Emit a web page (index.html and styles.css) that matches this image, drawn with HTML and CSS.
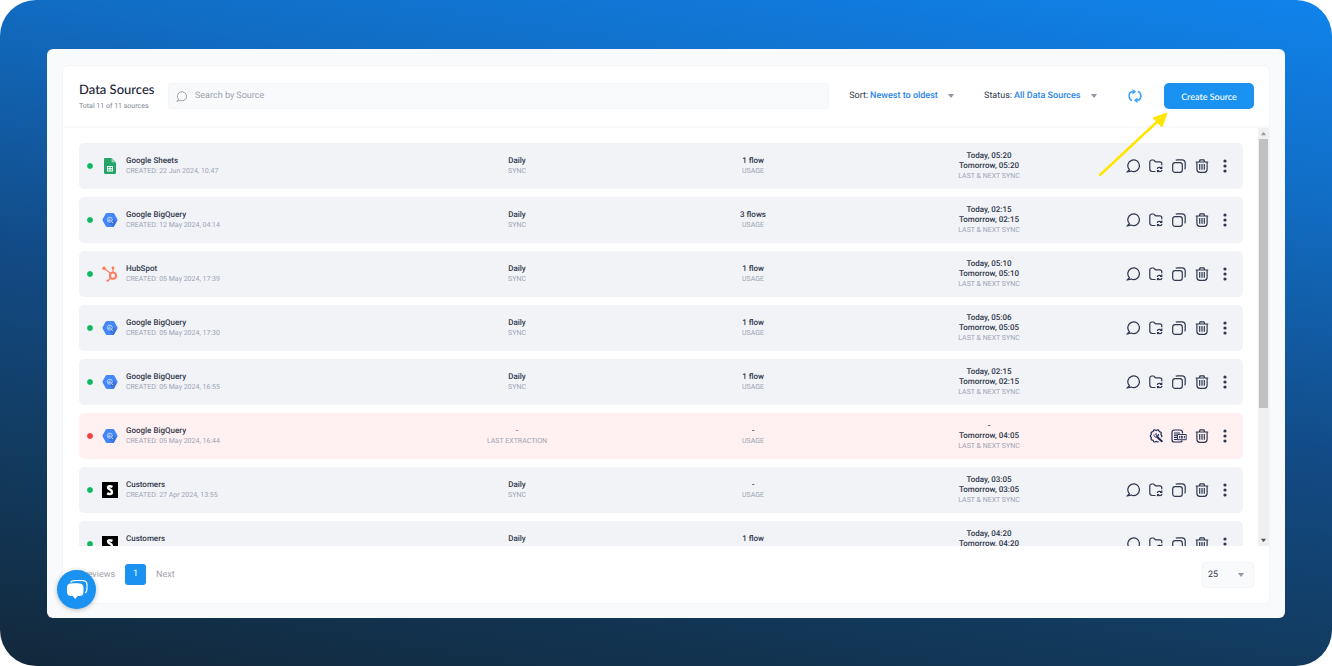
FILE: index.html
```html
<!DOCTYPE html>
<html lang="en">
<head>
<meta charset="utf-8">
<title>Data Sources</title>
<link rel="stylesheet" href="styles.css">
</head>
<body>
<svg class="sprite" aria-hidden="true">
  <symbol id="search" viewBox="0 0 14 14"><path d="M.9 13.100l2.500-2.400A5.800 5.800 0 1 1 5.700 12.200C4.600 11.900 3.400 12.300.9 13.100z" fill="none" stroke="currentColor" stroke-width="1.200" stroke-linejoin="round"/></symbol>
  <symbol id="folder" viewBox="0 0 14 14"><path d="M6.500 12.500H3.200A2.400 2.400 0 0 1 .8 10.100V3A2 2 0 0 1 2.800 1h1.400c.7 0 1 .3 1.400.9.4.6.8.9 1.500.9h3.700a2 2 0 0 1 2 2v1.400M8.300 10c.1-1 .9-1.700 1.900-1.700.8 0 1.500.3 2.100 1M12.800 7.600v1.800H11M13 10.900c-.2 1-1 1.700-2 1.700-.9 0-1.500-.4-2-1M8.500 13.300v-1.800h1.700" fill="none" stroke="currentColor" stroke-width="1.200"/></symbol>
  <symbol id="copy" viewBox="0 0 14 14"><rect x=".7" y="3.700" width="9.600" height="9.600" rx="2.400" fill="none" stroke="currentColor" stroke-width="1.200"/><path d="M3.800 1.200C4.200.9 4.600.8 5.200.8H10a3.200 3.200 0 0 1 3.200 3.200v4.800c0 .6-.1 1-.5 1.500" fill="none" stroke="currentColor" stroke-width="1.200"/></symbol>
  <symbol id="trash" viewBox="0 0 14 14"><path d="M1.200 3h11.600M4.300 2.700l.8-1.800h3.800l.8 1.800M1.900 3.200v7.100c0 2 1 3 2.900 3h4.400c1.900 0 2.900-1 2.900-3V3.200" fill="none" stroke="currentColor" stroke-width="1.200" stroke-linecap="round"/><path d="M4.700 5v5.800M7 5v5.800M9.300 5v5.800" stroke="currentColor" stroke-width="1.200"/></symbol>
  <symbol id="more" viewBox="0 0 14 14"><circle cx="7" cy="2" r="1.600" fill="currentColor"/><circle cx="7" cy="7" r="1.600" fill="currentColor"/><circle cx="7" cy="12" r="1.600" fill="currentColor"/></symbol>
  <symbol id="repair" viewBox="0 0 14 14"><path d="M12.300 8c.8-.5.800-1.600 0-2.100-.5-.4-.5-.8-.2-1.400.4-.9-.2-1.700-1.200-1.700-.6 0-.9-.3-1-.9C9.700.9 8.600.5 7.900 1.200c-.5.5-1 .5-1.500 0C5.700.5 4.600.9 4.400 1.900c-.1.6-.5.9-1 .9-1 0-1.600.9-1.200 1.700.3.600.2 1-.3 1.400-.8.600-.8 1.600 0 2.100.5.400.6.800.3 1.400-.4.900.2 1.700 1.200 1.700.6 0 .9.300 1 .9.200 1 1.300 1.300 2 .7.500-.5 1-.5 1.500 0 .6.500 1.400.4 1.800-.2" fill="none" stroke="currentColor" stroke-width="1.200"/><path d="M8.200 8l4.600 4.200" stroke="currentColor" stroke-width="2" stroke-linecap="round"/><path d="M7.200 4.200L6.800 6l1.700.5 1-1.200a2 2 0 0 1-2.200 2.700A2 2 0 0 1 5 5.500" fill="none" stroke="currentColor"/></symbol>
  <symbol id="report" viewBox="0 0 16 14"><path d="M11.500 4.500V3.300A2.300 2.300 0 0 0 9.200 1H3.300A2.300 2.300 0 0 0 1 3.300v7.400A2.300 2.300 0 0 0 3.300 13h5.900c1.100 0 1.800-.6 2.100-1.500M3 4h6M3 6.200h3M3 8.400h3M3 10.500h3.500" fill="none" stroke="currentColor" stroke-width="1.200"/><path d="M6.500 5.500h8.700v5.200H6.500zM8.500 7v2.300M10.300 7h1v2.200h-1zM13.400 7v2.300" fill="none" stroke="currentColor" stroke-width=".9"/></symbol>
  <symbol id="caret" viewBox="0 0 6 4"><path d="M0 0h6L3.500 3.500h-1z" fill="currentColor"/></symbol>
  <symbol id="refresh" viewBox="0 0 14 14"><path d="M4.200 11.500C2.300 11 1.200 9.500 1.200 7.600V6.400c0-2.200 1.400-3.600 3.600-3.600M9.800 2.500c1.900.5 3 2 3 3.900v1.200c0 2.200-1.400 3.600-3.600 3.600" fill="none" stroke="currentColor" stroke-width="1.600"/><path d="M4.500 0l3.700 2.800-3.700 2.800zM9.500 14l-3.700-2.800 3.700-2.800z" fill="currentColor"/></symbol>
  <symbol id="sheets" viewBox="0 0 16 16"><path d="M3.200 0h6.300L14 4.500v10.300c0 .7-.5 1.200-1.200 1.200H3.200C2.500 16 2 15.500 2 14.800V1.200C2 .5 2.500 0 3.200 0z" fill="#23a566"/><path d="M9.500 0L14 4.500H9.500z" fill="#8fd0b1"/><path d="M5 8h6v5.500H5z" fill="#fff"/><path d="M6 9h1.600v1.300H6zM8.500 9h1.600v1.300H8.500zM6 11.200h1.600v1.300H6zM8.500 11.200h1.600v1.300H8.500z" fill="#23a566"/></symbol>
  <symbol id="bigquery" viewBox="0 0 16 16"><path d="M4.900 1h6.200c.5 0 .9.200 1.100.6l3.200 5.700c.2.400.2.900 0 1.300l-3.200 5.700c-.2.400-.6.700-1.100.7H4.900c-.5 0-.9-.3-1.100-.7L.6 8.600a1.300 1.300 0 0 1 0-1.300l3.200-5.700C4 1.200 4.400 1 4.900 1z" fill="#4387fb"/><path d="M10.500 6l4 3.600-2.600 4.700c-.2.400-.5.700-.9.700l-4-4z" fill="#3d73d9"/><circle cx="7.800" cy="7.700" r="2.500" fill="none" stroke="#d5e4ff" stroke-width=".8"/><path d="M9.700 9.700l1.300 1.300M6.700 7.500v1.300M7.800 6.500v2.700M8.900 8v.8" stroke="#d5e4ff" stroke-width=".8"/></symbol>
  <symbol id="hubspot" viewBox="0 0 16 16"><g fill="none" stroke="#ff7a59"><circle cx="11" cy="9.700" r="3.100" stroke-width="1.900"/><path d="M11 6.500V2.700M8.700 7.500L2.300 2.400M8.700 12l-2.800 2.800" stroke-width="1.200"/></g><g fill="#ff7a59"><circle cx="11" cy="2" r="1.400"/><circle cx="2" cy="2.200" r="1.700"/><circle cx="5.700" cy="14.600" r="1.200"/></g></symbol>
  <symbol id="customers" viewBox="0 0 16 16"><path d="M0 0h16v16H0z"/><path d="M10.500 4.800C9.600 4.400 8.700 4.200 7.800 4.200 6.700 4.200 6 4.700 6 5.500 6 7.700 10 7 10 9.900c0 1.400-1 2.100-2.500 2.100-.8 0-1.700-.2-2.400-.6" fill="none" stroke="#fff" stroke-width="2.400"/></symbol>
</svg>

<div class="stage">
<main class="window">
  <section class="panel">
    <header class="toolbar">
      <div class="title"><h1>Data Sources</h1><p>Total 11 of 11 sources</p></div>
      <label class="search"><svg class="search-icon"><use href="#search"/></svg><input type="text" placeholder="Search by Source" aria-label="Search by Source"></label>
      <div class="filter"><label for="sort">Sort:</label><select id="sort"><option>Newest to oldest</option></select><svg class="caret"><use href="#caret"/></svg></div>
      <div class="filter status"><label for="status">Status:</label><select id="status"><option>All Data Sources</option></select><svg class="caret"><use href="#caret"/></svg></div>
      <button class="refresh" aria-label="Refresh"><svg><use href="#refresh"/></svg></button>
      <button class="create">Create Source</button>
    </header>

    <div class="body">
      <ul class="list">
        <li class="row">
          <div class="source"><i class="dot"></i><svg class="logo"><use href="#sheets"/></svg><div><b>Google Sheets</b><small>CREATED: 22 Jun 2024, 10:47</small></div></div>
          <div class="cell"><b>Daily</b><small>SYNC</small></div>
          <div class="cell"><b>1 flow</b><small>USAGE</small></div>
          <div class="cell"><b>Today, 05:20</b><b>Tomorrow, 05:20</b><small>LAST &amp; NEXT SYNC</small></div>
          <div class="actions"><button aria-label="Preview"><svg><use href="#search"/></svg></button><button aria-label="Move"><svg><use href="#folder"/></svg></button><button aria-label="Copy"><svg><use href="#copy"/></svg></button><button aria-label="Delete"><svg><use href="#trash"/></svg></button><button aria-label="More"><svg><use href="#more"/></svg></button></div>
        </li>
        <li class="row">
          <div class="source"><i class="dot"></i><svg class="logo"><use href="#bigquery"/></svg><div><b>Google BigQuery</b><small>CREATED: 12 May 2024, 04:14</small></div></div>
          <div class="cell"><b>Daily</b><small>SYNC</small></div>
          <div class="cell"><b>3 flows</b><small>USAGE</small></div>
          <div class="cell"><b>Today, 02:15</b><b>Tomorrow, 02:15</b><small>LAST &amp; NEXT SYNC</small></div>
          <div class="actions"><button aria-label="Preview"><svg><use href="#search"/></svg></button><button aria-label="Move"><svg><use href="#folder"/></svg></button><button aria-label="Copy"><svg><use href="#copy"/></svg></button><button aria-label="Delete"><svg><use href="#trash"/></svg></button><button aria-label="More"><svg><use href="#more"/></svg></button></div>
        </li>
        <li class="row">
          <div class="source"><i class="dot"></i><svg class="logo"><use href="#hubspot"/></svg><div><b>HubSpot</b><small>CREATED: 05 May 2024, 17:39</small></div></div>
          <div class="cell"><b>Daily</b><small>SYNC</small></div>
          <div class="cell"><b>1 flow</b><small>USAGE</small></div>
          <div class="cell"><b>Today, 05:10</b><b>Tomorrow, 05:10</b><small>LAST &amp; NEXT SYNC</small></div>
          <div class="actions"><button aria-label="Preview"><svg><use href="#search"/></svg></button><button aria-label="Move"><svg><use href="#folder"/></svg></button><button aria-label="Copy"><svg><use href="#copy"/></svg></button><button aria-label="Delete"><svg><use href="#trash"/></svg></button><button aria-label="More"><svg><use href="#more"/></svg></button></div>
        </li>
        <li class="row">
          <div class="source"><i class="dot"></i><svg class="logo"><use href="#bigquery"/></svg><div><b>Google BigQuery</b><small>CREATED: 05 May 2024, 17:30</small></div></div>
          <div class="cell"><b>Daily</b><small>SYNC</small></div>
          <div class="cell"><b>1 flow</b><small>USAGE</small></div>
          <div class="cell"><b>Today, 05:06</b><b>Tomorrow, 05:05</b><small>LAST &amp; NEXT SYNC</small></div>
          <div class="actions"><button aria-label="Preview"><svg><use href="#search"/></svg></button><button aria-label="Move"><svg><use href="#folder"/></svg></button><button aria-label="Copy"><svg><use href="#copy"/></svg></button><button aria-label="Delete"><svg><use href="#trash"/></svg></button><button aria-label="More"><svg><use href="#more"/></svg></button></div>
        </li>
        <li class="row">
          <div class="source"><i class="dot"></i><svg class="logo"><use href="#bigquery"/></svg><div><b>Google BigQuery</b><small>CREATED: 05 May 2024, 16:55</small></div></div>
          <div class="cell"><b>Daily</b><small>SYNC</small></div>
          <div class="cell"><b>1 flow</b><small>USAGE</small></div>
          <div class="cell"><b>Today, 02:15</b><b>Tomorrow, 02:15</b><small>LAST &amp; NEXT SYNC</small></div>
          <div class="actions"><button aria-label="Preview"><svg><use href="#search"/></svg></button><button aria-label="Move"><svg><use href="#folder"/></svg></button><button aria-label="Copy"><svg><use href="#copy"/></svg></button><button aria-label="Delete"><svg><use href="#trash"/></svg></button><button aria-label="More"><svg><use href="#more"/></svg></button></div>
        </li>
        <li class="row failed">
          <div class="source"><i class="dot"></i><svg class="logo"><use href="#bigquery"/></svg><div><b>Google BigQuery</b><small>CREATED: 05 May 2024, 16:44</small></div></div>
          <div class="cell"><b class="error">-</b><small>LAST EXTRACTION</small></div>
          <div class="cell"><b>-</b><small>USAGE</small></div>
          <div class="cell"><b>-</b><b>Tomorrow, 04:05</b><small>LAST &amp; NEXT SYNC</small></div>
          <div class="actions"><button aria-label="Repair"><svg class="navy"><use href="#repair"/></svg></button><button aria-label="Report"><svg class="wide navy"><use href="#report"/></svg></button><button aria-label="Delete"><svg><use href="#trash"/></svg></button><button aria-label="More"><svg><use href="#more"/></svg></button></div>
        </li>
        <li class="row">
          <div class="source"><i class="dot"></i><svg class="logo"><use href="#customers"/></svg><div><b>Customers</b><small>CREATED: 27 Apr 2024, 13:55</small></div></div>
          <div class="cell"><b>Daily</b><small>SYNC</small></div>
          <div class="cell"><b>-</b><small>USAGE</small></div>
          <div class="cell"><b>Today, 03:05</b><b>Tomorrow, 03:05</b><small>LAST &amp; NEXT SYNC</small></div>
          <div class="actions"><button aria-label="Preview"><svg><use href="#search"/></svg></button><button aria-label="Move"><svg><use href="#folder"/></svg></button><button aria-label="Copy"><svg><use href="#copy"/></svg></button><button aria-label="Delete"><svg><use href="#trash"/></svg></button><button aria-label="More"><svg><use href="#more"/></svg></button></div>
        </li>
        <li class="row">
          <div class="source"><i class="dot"></i><svg class="logo"><use href="#customers"/></svg><div><b>Customers</b><small>&nbsp;</small></div></div>
          <div class="cell"><b>Daily</b><small>&nbsp;</small></div>
          <div class="cell"><b>1 flow</b><small>&nbsp;</small></div>
          <div class="cell"><b>Today, 04:20</b><b>Tomorrow, 04:20</b><small>&nbsp;</small></div>
          <div class="actions"><button aria-label="Preview"><svg><use href="#search"/></svg></button><button aria-label="Move"><svg><use href="#folder"/></svg></button><button aria-label="Copy"><svg><use href="#copy"/></svg></button><button aria-label="Delete"><svg><use href="#trash"/></svg></button><button aria-label="More"><svg><use href="#more"/></svg></button></div>
        </li>
      </ul>
      <div class="scrollbar">
        <svg class="step up"><use href="#caret"/></svg>
        <div class="track"><div class="thumb"></div></div>
        <svg class="step"><use href="#caret"/></svg>
      </div>
    </div>

    <footer class="pager">
      <nav><a href="#prev">Previews</a><a class="current" href="#1">1</a><a href="#next">Next</a></nav>
      <div class="page-size"><select aria-label="Rows per page"><option>25</option></select><svg class="caret"><use href="#caret"/></svg></div>
    </footer>
  </section>
  <button class="chat" aria-label="Open chat"><svg viewBox="0 0 22 20"><path d="M4.500 2.500C5 1 6 .7 8 .6c3-.2 6-.2 9 0 2.600.2 3.700 1 3.900 3.400.2 2.300.1 4.500-.2 6.300-.3 1.500-.8 2.200-1.700 2.600" fill="none" stroke="#fff" stroke-width="1.200"/><path d="M5 3.500c2.800-.2 5.700-.2 8.500 0 2.700.2 3.700 1.100 3.900 3.500.2 2 .2 3.700 0 5.500-.2 2.500-1.300 3.400-4 3.600h-1.700L9.200 19l-2.400-2.900H5c-2.700-.2-3.700-1.200-3.900-3.600-.2-1.800-.2-3.500 0-5.500C1.300 4.600 2.300 3.700 5 3.500z" fill="#fff"/></svg></button>
  <svg class="pointer" viewBox="0 0 72 68" aria-hidden="true"><path d="M3 65L61 11" stroke="#ffe600" stroke-width="2.500" stroke-linecap="round"/><path d="M70 3l-5 14-9-9z" fill="#ffe600" stroke="#ffe600"/></svg>
</main>
</div>
</body>
</html>
```

FILE: styles.css
```css
* { box-sizing: border-box; }
body { margin: 0; background: #fff; color: #30384a; font-family: Roboto, "Liberation Sans", sans-serif; font-size: 9px; text-rendering: geometricPrecision; }
h1, p, ul { margin: 0; padding: 0; }
button, input, select { font: inherit; color: inherit; border: 0; background: none; padding: 0; margin: 0; outline: 0; text-rendering: inherit; }
select { appearance: none; }
svg { display: block; flex: none; }
.sprite { position: absolute; width: 0; height: 0; }

.stage { display: flex; height: 100vh; min-height: 400px; padding: 49px 47px 48px; border-radius: 36px; background: linear-gradient(189deg, #1083ec 0%, #116dc4 23%, #124b86 52%, #12395b 78%, #12283b 100%); }
.window { position: relative; display: flex; flex: 1; min-width: 0; padding: 16px 15px 14px; border-radius: 6px; background: #f9fafc; }
.panel { display: flex; flex: 1; flex-direction: column; min-width: 0; border: 1px solid #f4f5f8; border-radius: 6px; background: #fff; }

.toolbar { display: flex; align-items: center; height: 62px; padding: 0 15px 0 16px; border-bottom: 2px solid #f8f9fb; }
.title { width: 89px; white-space: nowrap; }
.title h1 { font: 500 13px/16px Lato, sans-serif; color: #1c2438; }
.title p { margin-top: 4px; font-size: 7px; line-height: 10px; color: #7d8490; }
.search { display: flex; flex: 1; align-items: center; gap: 8px; height: 26px; padding: 0 7px; border: 1px solid #f4f5f8; border-radius: 3px; background: #f9fafc; }
.search-icon { width: 11px; height: 11px; color: #9299a5; }
.search input { flex: 1; min-width: 0; }
.search input::placeholder { color: #9ba1ac; opacity: 1; }
.filter { display: flex; align-items: center; gap: 2px; margin-left: 20px; }
.filter.status { margin-left: 30px; }
.filter select { color: #2b86ea; font-weight: 500; }
.caret { width: 6px; height: 4px; color: #9299a5; }
.filter .caret { margin-left: 8px; }
.refresh { margin: 0 22px 0 31px; color: #3da3f5; }
.refresh svg { width: 14px; height: 14px; }
.create { width: 90px; height: 26px; border-radius: 5px; background: #1992f1; color: #fff; font: 500 9px Lato, sans-serif; }

.body { display: flex; flex: 1; min-height: 0; }
.list { display: flex; flex: 1; flex-direction: column; gap: 8px; min-width: 0; padding: 15px 15px 15px 16px; overflow: hidden; list-style: none; }
.row { display: grid; flex: none; grid-template-columns: 320fr 236fr 236fr 236fr 136fr; align-items: center; height: 46px; border-radius: 5px; background: #f2f3f7; }
.row.failed { background: #fff1f1; }
.row b, .row small { display: block; line-height: 10px; white-space: nowrap; }
.row b { font-size: 8px; font-weight: 500; }
.row small { font-size: 7px; color: #9ca3b4; font-weight: 400; }
.row b.error, .failed .dot { color: #f0403c; }
.source { display: flex; align-items: center; gap: 8px; padding-left: 7px; }
.dot { width: 8px; height: 8px; border: 1px solid #fff; border-radius: 50%; background: currentColor; color: #14b562; }
.logo { width: 16px; height: 16px; }
.cell { text-align: center; }
.actions { display: flex; justify-content: flex-end; padding-right: 7px; }
.actions button { display: flex; justify-content: center; width: 23px; }
.actions svg { width: 14px; height: 14px; color: #30384f; }
.actions .wide { width: 16px; }
.actions .navy { color: #1b2a55; }

.scrollbar { display: flex; flex-direction: column; align-items: center; width: 11px; background: #f0f0f1; }
.step { width: 5px; height: 11px; color: #555; }
.step.up { transform: rotate(180deg); color: #999; }
.track { flex: 1; width: 9px; }
.thumb { height: 68%; background: #c1c1c1; }

.pager { display: flex; align-items: center; justify-content: space-between; height: 57px; padding: 0 15px 0 16px; }
.pager nav { display: flex; align-items: center; gap: 10px; }
.pager a { color: #9fa2a9; text-decoration: none; }
.pager a.current { width: 21px; border-radius: 3px; background: #1992f1; color: #fff; line-height: 21px; text-align: center; }
.page-size { display: flex; align-items: center; width: 52px; height: 26px; padding: 0 9px 0 5px; border: 1px solid #f3f4f7; border-radius: 3px; background: #f9fafc; }
.page-size select { flex: 1; }

.chat { position: absolute; left: 10px; bottom: 9px; display: grid; place-items: center; width: 39px; height: 39px; border-radius: 50%; background: #1992f1; box-shadow: 0 1px 5px rgba(0, 0, 0, .25); }
.chat svg { width: 22px; height: 20px; }
.pointer { position: absolute; top: 61px; right: 116px; width: 72px; height: 68px; pointer-events: none; }
```
